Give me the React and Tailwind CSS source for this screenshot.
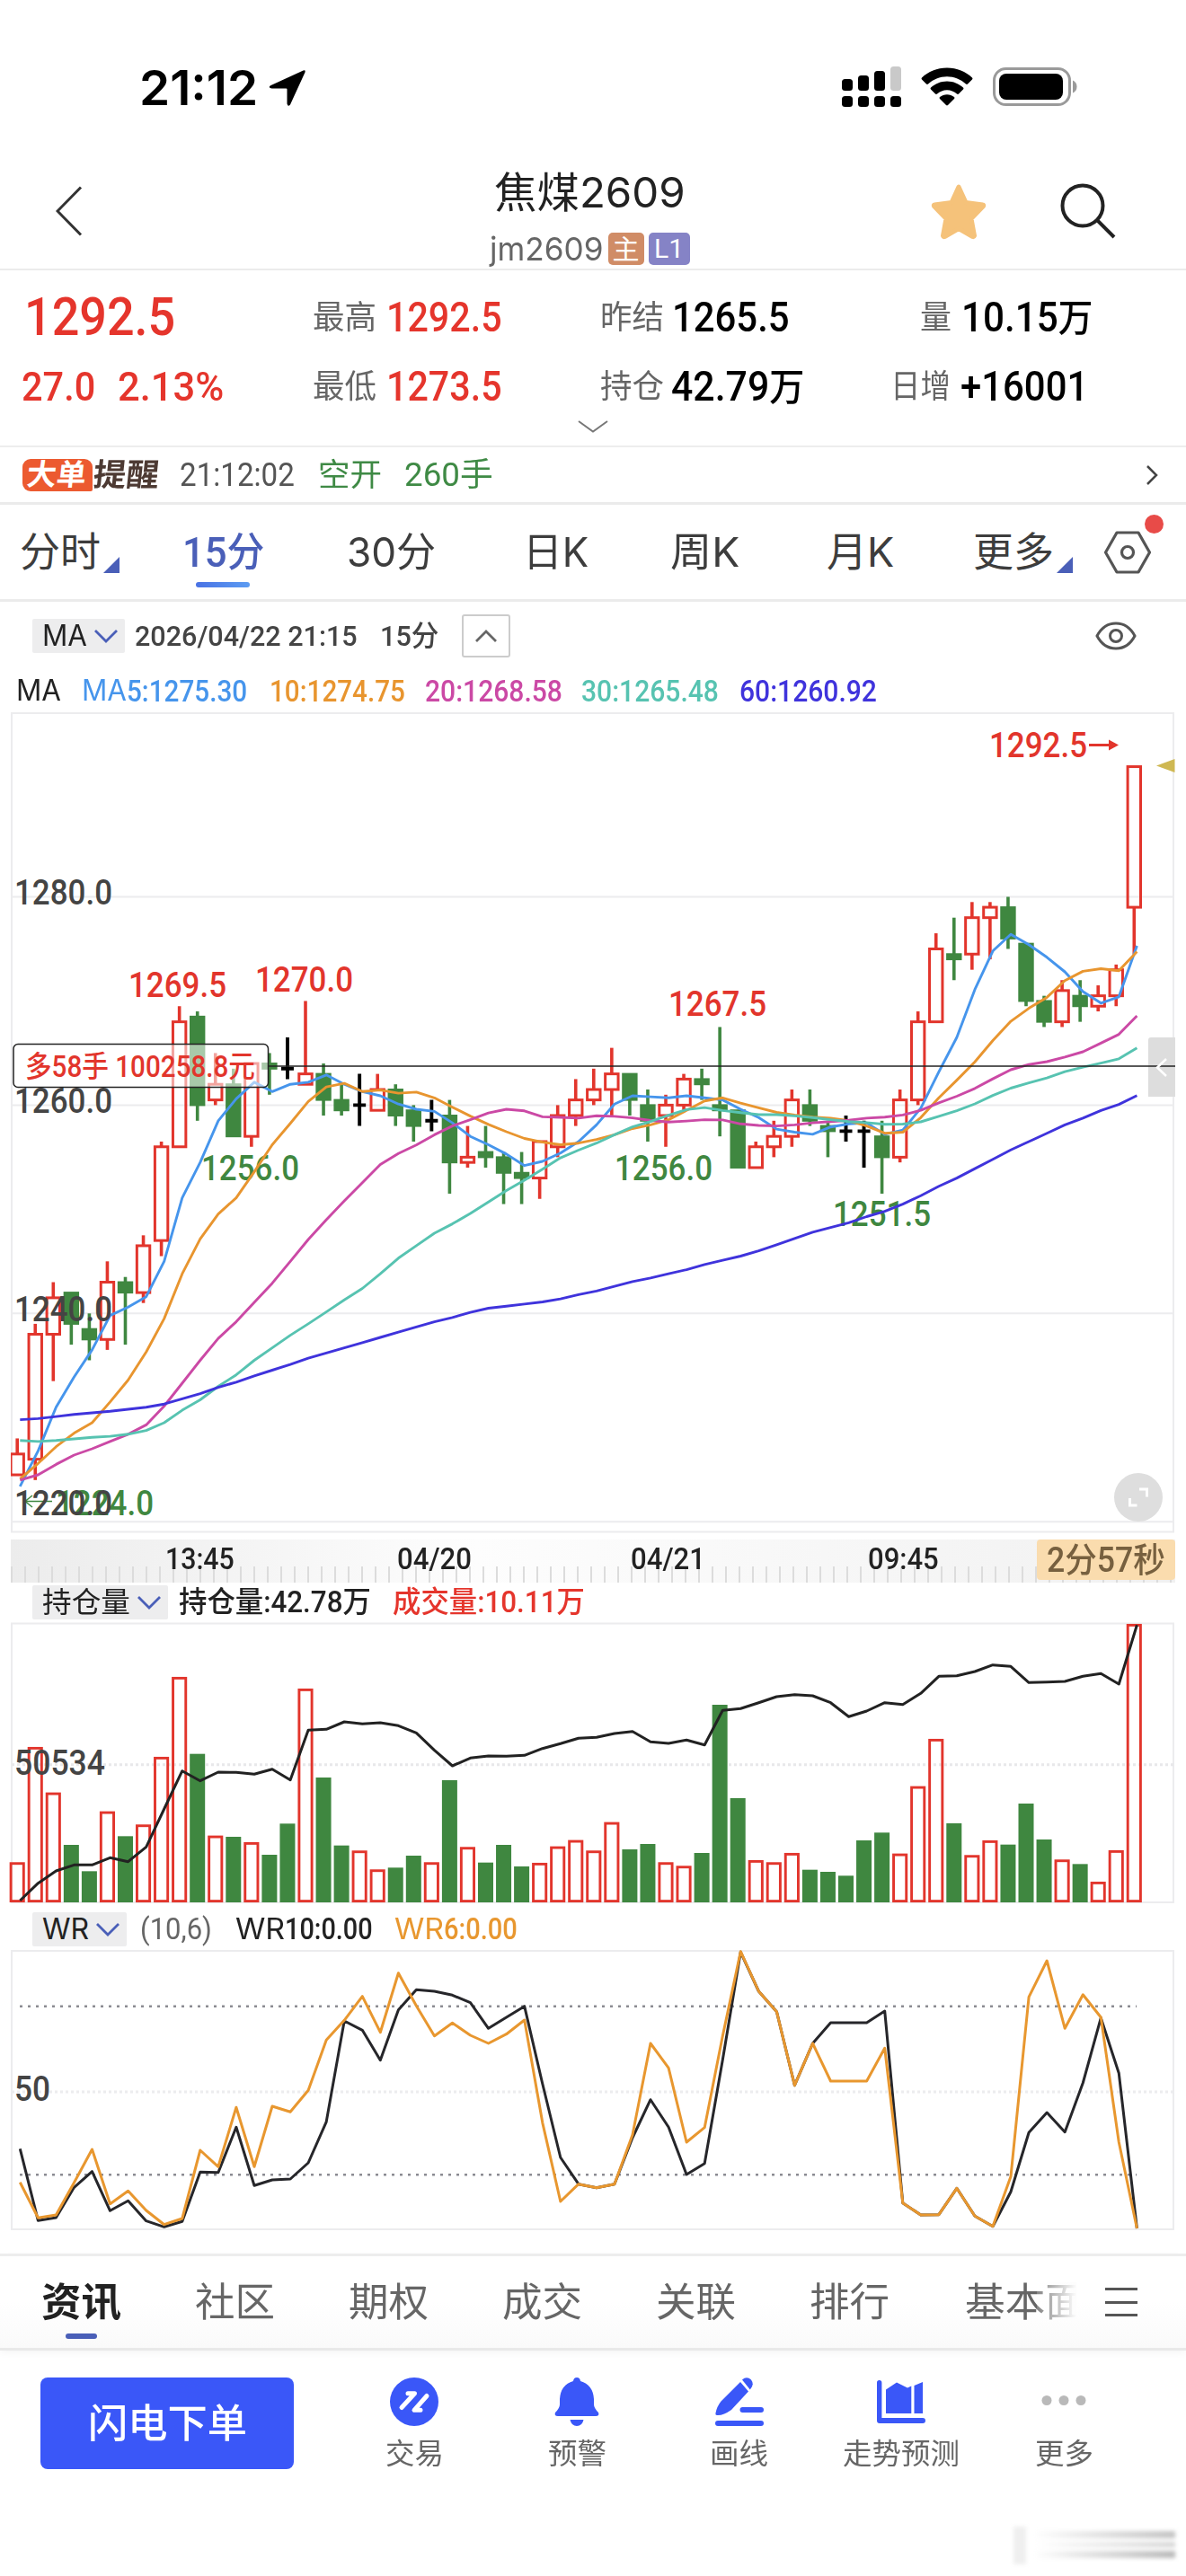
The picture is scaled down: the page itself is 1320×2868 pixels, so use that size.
import { useLayoutEffect, useRef, useState } from "react";

const NUM = "font-['Roboto','Noto_Sans_CJK_SC',sans-serif]";
const UI = "font-['Inter','Noto_Sans_CJK_SC',sans-serif]";

// One line of text whose glyphs are condensed or widened to fill `w` pixels.
function Fit({ w, className = "", children }) {
  const ref = useRef(null);
  const [k, setK] = useState(1);
  useLayoutEffect(() => {
    setK(w / ref.current.offsetWidth);
  }, [w]);
  return (
    <span className={"inline-block shrink-0 whitespace-nowrap leading-none " + className} style={{ width: w }}>
      <span ref={ref} className="inline-block origin-left" style={{ transform: `scaleX(${k})` }}>
        {children}
      </span>
    </span>
  );
}

const RED = "#e2352c";
const GREEN = "#3f8740";

/* ---------- data ---------- */
// [body top, body bottom, high, low, kind]  kind: r = up, g = down, d = doji
const CANDLES = [
  [1226.5, 1224.5, 1228, 1224.5, "r"], [1238, 1226, 1239, 1224, "r"], [1241.5, 1238, 1243, 1233.5, "r"],
  [1242, 1239, 1242, 1237, "g"], [1238.5, 1237.5, 1240, 1235.5, "g"], [1243, 1237.5, 1245, 1236.5, "r"],
  [1243, 1242, 1243.5, 1237, "g"], [1246.5, 1242, 1247.5, 1241, "r"], [1256, 1247, 1256.5, 1245.5, "r"],
  [1268, 1256, 1269.5, 1256, "r"], [1268.5, 1260, 1269, 1258.5, "g"], [1262, 1260.5, 1265, 1260, "r"],
  [1262, 1257, 1263.5, 1257, "g"], [1264, 1257, 1264, 1256, "r"], [1264, 1263.5, 1265, 1261, "g"],
  [1263.5, 1263.5, 1266.5, 1262.5, "d"], [1263, 1262, 1270, 1262, "r"], [1263, 1260.5, 1264, 1259, "g"],
  [1260.5, 1259.5, 1262, 1259, "g"], [1260, 1260, 1263, 1258, "d"], [1261.5, 1259.5, 1263, 1259.5, "r"],
  [1261.5, 1259, 1262, 1258, "g"], [1259.5, 1258, 1260, 1256.5, "g"], [1258.5, 1258.5, 1260.5, 1257.5, "d"],
  [1259, 1254.5, 1260.5, 1251.5, "g"], [1255, 1254.5, 1258, 1254, "r"], [1255.5, 1255, 1258, 1254, "g"],
  [1255, 1253.5, 1255.5, 1250.5, "g"], [1253.5, 1253, 1255.5, 1250.5, "g"], [1256.5, 1253, 1256.5, 1251, "r"],
  [1259, 1256, 1260, 1255, "r"], [1260.5, 1259, 1262.5, 1258, "r"], [1261.5, 1260.5, 1263.5, 1260, "r"],
  [1263, 1261.5, 1265.5, 1259, "r"], [1263, 1260.5, 1263, 1259, "g"], [1260, 1258.5, 1261.5, 1256.5, "g"],
  [1260, 1259, 1261, 1256, "r"], [1262.5, 1260, 1263, 1259.5, "r"], [1262.5, 1262, 1263.5, 1260.5, "g"],
  [1260, 1259.5, 1267.5, 1257, "g"], [1259.5, 1254, 1259.5, 1254, "g"], [1256, 1254, 1256.5, 1254, "r"],
  [1257, 1256, 1258.5, 1255, "r"], [1260.5, 1257, 1261.5, 1256, "r"], [1260, 1258.5, 1261.5, 1258, "g"],
  [1258, 1257.5, 1258.5, 1255, "g"], [1257.5, 1257.5, 1259, 1256.5, "d"], [1257.5, 1257.5, 1258.5, 1254, "d"],
  [1257, 1255, 1258.5, 1251.5, "g"], [1260.5, 1255, 1261.5, 1254.5, "r"], [1268, 1260.5, 1269, 1260, "r"],
  [1275, 1268, 1276.5, 1268, "r"], [1274.5, 1274, 1278, 1272, "g"], [1278, 1274.5, 1279.5, 1273, "r"],
  [1279, 1278, 1279.5, 1274, "r"], [1279, 1276, 1280, 1275, "g"], [1275.5, 1270, 1275.5, 1269.5, "g"],
  [1270, 1268, 1270.5, 1267.5, "g"], [1271, 1268, 1272, 1267.5, "r"], [1270.5, 1269.5, 1272, 1268, "g"],
  [1270.5, 1269.5, 1271.5, 1269, "r"], [1273, 1270.5, 1273.5, 1269.5, "r"], [1292.5, 1279, 1292.5, 1274.5, "r"],
];
const CLOSES = CANDLES.map(([t, b, , , k]) => (k === "r" ? t : b));

// Moving average; `head` holds the values that depend on bars before the window.
const ma = (n, head) =>
  CLOSES.map((_, i) =>
    i < n - 1 ? head[i] : CLOSES.slice(i - n + 1, i + 1).reduce((a, b) => a + b, 0) / n
  );

const MAS = [
  ["#4695ec", ma(5, [1223.4, 1226.8, 1231, 1233.9])],
  ["#e8952f", ma(10, [1224.1, 1225.6, 1227.2, 1228.5, 1229.5, 1231.5, 1233.6, 1236.3, 1239.5])],
  ["#cb49a5", ma(20, [1224, 1224.5, 1225.5, 1226.4, 1227, 1227.7, 1228.4, 1229.3, 1231.1, 1233.3, 1235.5, 1237.6, 1239.2, 1241.05, 1242.9, 1245, 1247.1, 1249, 1250.8])],
  ["#57c3b1", ma(30, [1227.8, 1227.7, 1227.8, 1227.95, 1228.1, 1228.2, 1228.4, 1228.75, 1229.5, 1230.7, 1231.7, 1233, 1234.1, 1235.5, 1236.7, 1237.9, 1239, 1240.15, 1241.3, 1242.4, 1243.8, 1245.3, 1246.5, 1247.7, 1248.6, 1249.6, 1250.7, 1251.8, 1252.8])],
  ["#3f33dc", ma(60, [1229.8, 1229.9, 1230.1, 1230.3, 1230.45, 1230.6, 1230.8, 1231, 1231.3, 1231.8, 1232.3, 1232.9, 1233.4, 1234, 1234.55, 1235.1, 1235.7, 1236.2, 1236.7, 1237.2, 1237.7, 1238.2, 1238.7, 1239.2, 1239.6, 1240.1, 1240.5, 1240.7, 1240.9, 1241.1, 1241.4, 1241.8, 1242.15, 1242.6, 1243.05, 1243.4, 1243.8, 1244.2, 1244.7, 1245.1, 1245.5, 1246, 1246.6, 1247.2, 1247.8, 1248.25, 1248.7, 1249.3, 1249.8, 1250.5, 1251.3, 1252.2, 1253, 1253.9, 1254.8, 1255.7, 1256.5, 1257.3, 1258.1])],
];

// Tops of the volume bars and line points, in thirds of a pixel below the panel origin.
const VOL = [850, 465, 617, 792, 880, 680, 763, 724, 498, 231, 488, 761, 765, 783, 825, 721, 270, 567, 794, 811, 874, 868, 828, 850, 576, 799, 851, 792, 864, 852, 797, 776, 811, 716, 807, 789, 850, 862, 819, 324, 636, 843, 850, 819, 875, 882, 895, 777, 751, 821, 596, 438, 720, 826, 777, 791, 654, 774, 841, 856, 915, 810, 54];
const OI = [978, 920, 879, 859, 859, 835, 848, 799, 672, 545, 578, 549, 550, 556, 539, 575, 409, 406, 381, 388, 384, 394, 418, 476, 528, 502, 495, 496, 493, 470, 454, 436, 433, 420, 413, 448, 453, 442, 458, 343, 337, 317, 297, 290, 294, 317, 364, 345, 317, 323, 286, 229, 227, 213, 191, 196, 250, 248, 246, 229, 220, 255, 58];
const WR10 = [817, 1057, 1047, 946, 893, 1024, 991, 1058, 1078, 1060, 895, 896, 745, 940, 921, 918, 864, 727, 390, 421, 521, 353, 286, 291, 304, 329, 415, 378, 341, 600, 846, 935, 947, 935, 780, 653, 745, 903, 866, 520, 160, 291, 359, 605, 465, 396, 396, 396, 357, 998, 1038, 1037, 949, 1042, 1076, 961, 763, 696, 761, 597, 380, 565, 1083];
const WR6 = [929, 1048, 1038, 930, 819, 1001, 958, 1023, 1070, 1050, 822, 877, 679, 877, 675, 694, 622, 454, 388, 308, 428, 230, 340, 440, 397, 438, 465, 434, 387, 730, 993, 935, 947, 935, 770, 465, 547, 795, 746, 440, 158, 291, 359, 605, 465, 591, 591, 591, 481, 998, 1038, 1037, 949, 1042, 1076, 910, 310, 189, 415, 302, 378, 795, 1083];

const bx = (i) => 19.2 + 20.05 * i;
const lx = (i) => 22.3 + 20.05 * i;
const py = (p) => 1230.4 - (p - 1260) * 11.595;
const line = (vals, f) => vals.map((v, i) => `${lx(i).toFixed(1)},${f(v).toFixed(1)}`).join(" ");

function Label({ x, y, w, c, size = 39, children }) {
  return (
    <text x={x} y={y} textLength={w} lengthAdjust="spacingAndGlyphs" fill={c} fontSize={size} className={NUM + " font-medium"}>
      {children}
    </text>
  );
}

function PriceChart() {
  return (
    <svg className="block shrink-0" width="1320" height="914" viewBox="0 793 1320 914">
      <g stroke="#ececee" strokeWidth="2" fill="none">
        <path d="M13 1705.500V794H1306V1705.500Z" />
        <path d="M13 998.500H1307M13 1230.400H1307M13 1462.300H1307M13 1694.300H1307" />
      </g>
      <clipPath id="plot"><rect x="12" y="793" width="1296" height="914" /></clipPath>
      <g clipPath="url(#plot)">
        {CANDLES.map(([t, b, h, l, k], i) => {
          const x = bx(i);
          if (k === "d")
            return (
              <path key={i} d={`M${x} ${py(h)}V${py(l)}M${x - 7} ${py(t)}H${x + 7}`} stroke="#000" strokeWidth="3.9" />
            );
          const c = k === "r" ? RED : GREEN;
          return (
            <g key={i} stroke={c} fill="none">
              {h > t && <path d={`M${x} ${py(h)}V${py(t)}`} strokeWidth="3.6" />}
              {l < b && <path d={`M${x} ${py(b)}V${py(l)}`} strokeWidth="3.6" />}
              {k === "r" ? (
                <rect x={x - 7.2} y={py(t)} width="14.4" height={py(b) - py(t)} strokeWidth="3" />
              ) : (
                <rect x={x - 8.7} y={py(t) - 1} width="17.4" height={py(b) - py(t) + 2} fill={c} stroke="none" />
              )}
            </g>
          );
        })}
      </g>
      <Label x={224} y={1314} w={109} c={GREEN}>1256.0</Label>
      <Label x={684} y={1314} w={109} c={GREEN}>1256.0</Label>
      <Label x={927} y={1365} w={109} c={GREEN}>1251.5</Label>
      <Label x={62} y={1687} w={109} c={GREEN}>1224.0</Label>
      <path d="M58 1671.500H28M36 1665L28 1671.500L36 1678" stroke={GREEN} strokeWidth="1.500" fill="none" />
      {MAS.map(([c, v]) => (
        <polyline key={c} points={line(v, py)} fill="none" stroke={c} strokeWidth="2.900" strokeLinejoin="round" />
      ))}
      <Label x={143} y={1110} w={109} c={RED}>1269.5</Label>
      <Label x={284} y={1104} w={109} c={RED}>1270.0</Label>
      <Label x={744} y={1131} w={109} c={RED}>1267.5</Label>
      <Label x={1101} y={843} w={109} c={RED}>1292.5</Label>
      <path d="M1212 829.500H1238" stroke={RED} strokeWidth="3" />
      <path d="M1234 823.500L1245 829.500L1234 835.500Z" fill={RED} />
      {[[1280, 1007], [1260, 1239], [1240, 1471], [1220, 1687]].map(([p, y]) => (
        <Label key={p} x={16} y={y} w={109} c="#444">{p.toFixed(1)}</Label>
      ))}
      <path d="M1287 852.500L1307.500 845V860Z" fill="#cfb852" />
      <path d="M1278 1221V1158Q1278 1155 1281 1155H1308V1221Z" fill="#dddddd" />
      <path d="M298 1187H1308" stroke="#222" strokeWidth="1.500" />
      <path d="M1298 1179L1288 1188.500L1298 1198" stroke="#fff" strokeWidth="2.500" fill="none" />
      <rect x="15" y="1162.500" width="283.500" height="48" rx="5" fill="#fff" fillOpacity=".55" stroke="#222" strokeWidth="1.500" />
      <Label x={28} y={1199} w={256} c={RED} size={33}>多58手 100258.8元</Label>
      <circle cx="1267" cy="1667" r="27" fill="#dedede" />
      <path d="M1268 1658H1276.500V1666.500M1265.500 1676H1257.500V1668" stroke="#fff" strokeWidth="3" fill="none" />
    </svg>
  );
}

const VOL_UP = { 19: 1, 23: 1 };
function VolumeChart() {
  const y = (v) => 1790 + v / 3;
  return (
    <svg className="block shrink-0" width="1320" height="314" viewBox="0 1806 1320 314">
      <path d="M13 1807.500H1306V2118H13Z" stroke="#ececee" strokeWidth="2" fill="none" />
      <path d="M13 1964.700H1306" stroke="#e8e8ea" strokeWidth="3" strokeDasharray="3 3" />
      {VOL.map((v, i) => {
        const up = CANDLES[i][4] === "r" || VOL_UP[i];
        const t = y(v);
        return up ? (
          <rect key={i} x={bx(i) - 7.1} y={t + 1.400} width="14.200" height={2116.600 - t - 1.400} fill="none" stroke={RED} strokeWidth="2.900" />
        ) : (
          <rect key={i} x={bx(i) - 8.500} y={t} width="17" height={2118 - t} fill={GREEN} />
        );
      })}
      <polyline points={line(OI, y)} fill="none" stroke="#222" strokeWidth="3" strokeLinejoin="round" />
      <Label x={16} y={1975.5} w={101} c="#444" size={38}>50534</Label>
    </svg>
  );
}

function WrChart() {
  const y = (v) => 2120 + v / 3;
  return (
    <svg className="block shrink-0" width="1320" height="314" viewBox="0 2170 1320 314">
      <path d="M13 2172H1306V2482H13Z" stroke="#ececee" strokeWidth="2" fill="none" />
      <path d="M13 2329H1306" stroke="#ececee" strokeWidth="3" strokeDasharray="3 3" />
      <path d="M22 2233.700H1265M22 2421.300H1265" stroke="#8b8b92" strokeWidth="2.600" strokeDasharray="3 6" />
      <polyline points={line(WR10, y)} fill="none" stroke="#26262a" strokeWidth="3" strokeLinejoin="round" />
      <polyline points={line(WR6, y)} fill="none" stroke="#e8972f" strokeWidth="3" strokeLinejoin="round" />
      <Label x={16} y={2339} w={40} c="#444" size={38}>50</Label>
    </svg>
  );
}

/* ---------- top ---------- */
function StatusBar() {
  return (
    <div className="flex h-[160px] shrink-0 items-start pt-[70px]">
      <div className="ml-[155px] flex h-[56px] items-center">
        <Fit w={132} className={UI + " text-[54px] font-semibold text-black"}>21:12</Fit>
      </div>
      <svg className="mt-[6px] ml-[11px]" width="43" height="44" viewBox="0 0 43 44">
        <path d="M39.500 2.500Q42.500 1.200 41.500 4.500L25 40.500Q22.500 43.500 21.500 39.500V23.500Q21.500 22.500 20.500 22.500H4.500Q0 21.500 3 19.200Z" fill="#000" />
      </svg>
      <svg className="mt-[2px] ml-[596px]" width="66" height="49" viewBox="0 0 66 49">
        <rect x="0" y="16" width="12" height="13" rx="3.500" />
        <rect x="18" y="12" width="12" height="17" rx="3.500" />
        <rect x="36" y="7" width="12" height="22" rx="3.500" />
        <rect x="54" y="2" width="12" height="27" rx="3.500" fill="#c9c9c9" />
        {[0, 18, 36, 54].map((x) => <rect key={x} x={x} y="35" width="12" height="12" rx="3.500" />)}
      </svg>
      <svg className="mt-[5px] ml-[22px]" width="58" height="43" viewBox="0 0 58 43">
        <path d="M29 .5C40 .5 50 4.800 57 11.500Q58 12.500 57 13.500L52 18.500Q51 19.300 50 18.500C44.500 13.300 37 10.200 29 10.200S13.500 13.300 8 18.500Q7 19.300 6 18.500L1 13.500Q0 12.500 1 11.500C8 4.800 18 .5 29 .5Z" />
        <path d="M29 15.500C36 15.500 42.300 18.300 47 22.500Q48 23.500 47 24.500L42 29.500Q41 30.300 40 29.500C37 26.800 33.200 25.200 29 25.200S21 26.800 18 29.500Q17 30.300 16 29.500L11 24.500Q10 23.500 11 22.500C15.700 18.300 22 15.500 29 15.500Z" />
        <path d="M29 30.200C32 30.200 34.800 31.300 37 33Q38 34 37 35L30 42Q29 42.800 28 42L21 35Q20 34 21 33C23.200 31.300 26 30.200 29 30.200Z" />
      </svg>
      <svg className="mt-[5px] ml-[22px]" width="94" height="43" viewBox="0 0 94 43">
        <rect x="1.500" y="1.500" width="84" height="40" rx="13" fill="none" stroke="#9a9a9a" strokeWidth="3" />
        <rect x="7" y="7" width="71" height="29" rx="8" />
        <path d="M89 14.500Q93.500 16.500 93.500 21.500T89 28.500Z" fill="#9a9a9a" />
      </svg>
    </div>
  );
}

function Header() {
  return (
    <div className="flex h-[141px] shrink-0 items-start border-b-2 border-[#ebebeb]">
      <svg className="mt-[47px] ml-[62px]" width="30" height="56" viewBox="0 0 30 56">
        <path d="M28 1.500L2 28L28 54.500" stroke="#333" strokeWidth="3" fill="none" />
      </svg>
      <div className="mt-[30px] ml-[449px] flex w-[230px] flex-col items-center">
        <Fit w={213} className={UI + " text-[47px] text-[#222]"}>焦煤2609</Fit>
        <div className="mt-[22px] flex h-[36px] items-center">
          <Fit w={127} className={UI + " text-[36px] text-[#666]"}>jm2609</Fit>
          <span className={UI + " ml-[5px] flex h-[36px] w-[40px] items-center justify-center rounded-[5px] bg-[#d08c66] text-[30px] leading-none text-white"}>主</span>
          <span className={NUM + " ml-[5px] flex h-[36px] w-[46px] items-center justify-center rounded-[5px] bg-[#8583c6] text-[30px] leading-none text-white"}>L1</span>
        </div>
      </div>
      <svg className="mt-[43px] ml-[264px]" width="64" height="66" viewBox="0 0 64 66">
        <path d="M32 5L40 22.500L59 25Q60 25 59.500 26.500L46 40.500L49.500 59.500Q49 61 47.500 60.500L32 51.500L16.500 60.500Q15 61 14.500 59.500L18 40.500L4.500 26.500Q4 25 5 25L24 22.500Z" fill="#f5c27a" stroke="#f5c27a" strokeWidth="5" strokeLinejoin="round" />
      </svg>
      <svg className="mt-[44px] ml-[80px]" width="64" height="64" viewBox="0 0 64 64">
        <circle cx="26" cy="25" r="22.500" fill="none" stroke="#222" strokeWidth="4" />
        <path d="M42 41L61 60" stroke="#222" strokeWidth="4" />
      </svg>
    </div>
  );
}

function Pair({ ml, label, lw, gap, value, vw, c = "text-black" }) {
  return (
    <div className={"flex items-center " + ml}>
      <Fit w={lw} className={UI + " text-[36px] text-[#666]"}>{label}</Fit>
      <Fit w={vw} className={NUM + " font-medium text-[46px] " + gap + " " + c}>{value}</Fit>
    </div>
  );
}

function Quote() {
  return (
    <div className="relative h-[197px] shrink-0 border-b-2 border-[#ededed]">
      <div className="flex h-[103px] items-center">
        <Fit w={168} className={NUM + " ml-[27px] text-[60px] font-medium text-[#e5352c]"}>1292.5</Fit>
        <Pair ml="ml-[153px]" label="最高" lw={71} gap="ml-[11px]" value="1292.5" vw={129} c="text-[#e5352c]" />
        <Pair ml="ml-[109px]" label="昨结" lw={71} gap="ml-[9px]" value="1265.5" vw={131} />
        <Pair ml="ml-[145px]" label="量" lw={35} gap="ml-[11px]" value={<>10.15<span className="text-[42px]">万</span></>} vw={146} />
      </div>
      <div className="flex h-[52px] items-center">
        <Fit w={82} className={NUM + " ml-[24px] text-[45px] font-medium text-[#e5352c]"}>27.0</Fit>
        <Fit w={118} className={NUM + " ml-[25px] text-[45px] font-medium text-[#e5352c]"}>2.13%</Fit>
        <Pair ml="ml-[99px]" label="最低" lw={71} gap="ml-[11px]" value="1273.5" vw={129} c="text-[#e5352c]" />
        <Pair ml="ml-[109px]" label="持仓" lw={71} gap="ml-[8px]" value={<>42.79<span className="text-[42px]">万</span></>} vw={148} />
        <Pair ml="ml-[96px]" label="日增" lw={67} gap="ml-[11px]" value="+16001" vw={142} />
      </div>
      <svg className="mx-auto mt-[12px] block" width="34" height="14" viewBox="0 0 34 14">
        <path d="M1 1L17 12.500L33 1" stroke="#777" strokeWidth="2" fill="none" />
      </svg>
    </div>
  );
}

function Alert() {
  return (
    <div className="flex h-[64px] shrink-0 items-center border-b-3 border-[#ebebeb]">
      <div className="ml-[25px] flex h-[36px] w-[78px] items-center rounded-t-[9px] rounded-bl-[9px] rounded-br-[2px] bg-[#ec5a30] pl-[5px]">
        <Fit w={66} className={UI + " -skew-x-6 text-[33px] font-bold text-white"}>大单</Fit>
      </div>
      <Fit w={73} className={UI + " ml-[1px] -skew-x-6 text-[35px] font-bold text-[#4d3a33]"}>提醒</Fit>
      <Fit w={128} className={NUM + " ml-[23px] text-[36px] text-[#555]"}>21:12:02</Fit>
      <Fit w={71} className={UI + " ml-[26px] text-[35px] text-[#3f8a45]"}>空开</Fit>
      <Fit w={99} className={NUM + " ml-[25px] text-[36px] text-[#3f8a45]"}>260手</Fit>
      <svg className="ml-[726px]" width="14" height="22" viewBox="0 0 14 22">
        <path d="M2 1L12 11L2 21" stroke="#444" strokeWidth="2.500" fill="none" />
      </svg>
    </div>
  );
}

const Corner = () => (
  <svg className="mt-[28px] ml-[3px] shrink-0" width="18" height="18" viewBox="0 0 18 18">
    <path d="M18 0V18H0Z" fill="#4a5fb8" />
  </svg>
);

function Periods() {
  const t = UI + " text-[45px] text-[#3d3d3d] ";
  return (
    <div className="relative flex h-[108px] shrink-0 items-center border-b-3 border-[#ebebeb]">
      <Fit w={90} className={t + "ml-[22px]"}>分时</Fit>
      <Corner />
      <div className="relative ml-[70px] flex">
        <Fit w={91} className={NUM + " text-[47px] font-medium text-[#4a5fb8]"}>15<span className="text-[45px]">分</span></Fit>
        <span className="absolute top-[57px] left-[15px] h-[6px] w-[60px] rounded-[3px] bg-linear-to-r from-[#4a72e4] to-[#5c9cf2]" />
      </div>
      <Fit w={99} className={t + "ml-[92px]"}>30分</Fit>
      <Fit w={73} className={t + "ml-[97px]"}>日K</Fit>
      <Fit w={77} className={t + "ml-[91px]"}>周K</Fit>
      <Fit w={75} className={t + "ml-[97px]"}>月K</Fit>
      <Fit w={90} className={t + "ml-[88px]"}>更多</Fit>
      <Corner />
      <svg className="ml-[34px] shrink-0" width="54" height="50" viewBox="0 0 54 50">
        <path d="M15 3H39L51.500 25L39 47H15L2.500 25Z" fill="none" stroke="#555" strokeWidth="3.200" strokeLinejoin="round" />
        <circle cx="27" cy="25" r="6.500" fill="none" stroke="#555" strokeWidth="3.200" />
      </svg>
      <span className="absolute top-[11px] right-[25px] size-[21px] rounded-full bg-[#e84b48]" />
    </div>
  );
}

function Chip({ children, w, tw }) {
  return (
    <div className="flex h-[38px] items-center rounded-[2px] bg-[#ededee]" style={{ width: w }}>
      <Fit w={tw} className={UI + " ml-[11px] text-[32px] text-[#222]"}>{children}</Fit>
      <svg className="ml-auto mr-[7px]" width="28" height="16" viewBox="0 0 28 16">
        <path d="M2 2L14 14L26 2" stroke="#4a5fb8" strokeWidth="2.800" fill="none" />
      </svg>
    </div>
  );
}

function ChartToolbar() {
  return (
    <div className="flex h-[76px] shrink-0 items-center">
      <div className="ml-[36px]"><Chip w={103} tw={50}>MA</Chip></div>
      <Fit w={248} className={NUM + " ml-[11px] text-[32px] font-medium text-[#444]"}>2026/04/22 21:15</Fit>
      <Fit w={65} className={NUM + " ml-[25px] text-[32px] font-medium text-[#444]"}>15分</Fit>
      <div className="ml-[26px] flex h-[48px] w-[54px] items-center justify-center rounded-[3px] border-2 border-[#ccc]">
        <svg width="26" height="15" viewBox="0 0 26 15"><path d="M2 13L13 2L24 13" stroke="#666" strokeWidth="2.800" fill="none" /></svg>
      </div>
      <svg className="ml-[651px]" width="46" height="34" viewBox="0 0 46 34">
        <path d="M2 17C7 7.500 14 3 23 3S39 7.500 44 17C39 26.500 32 31 23 31S7 26.500 2 17Z" fill="none" stroke="#555" strokeWidth="3" />
        <circle cx="23" cy="17" r="6.500" fill="none" stroke="#555" strokeWidth="3" />
      </svg>
    </div>
  );
}

function MaLegend() {
  const n = NUM + " text-[33px] font-medium ";
  return (
    <div className="flex h-[47px] shrink-0 items-center pb-[1px]">
      <Fit w={50} className={UI + " ml-[18px] text-[32px] text-[#222]"}>MA</Fit>
      <Fit w={50} className={UI + " ml-[23px] text-[32px] text-[#4695ec]"}>MA</Fit>
      <Fit w={134} className={n + "text-[#4695ec]"}>5:1275.30</Fit>
      <Fit w={151} className={n + "ml-[25px] text-[#e8952f]"}>10:1274.75</Fit>
      <Fit w={153} className={n + "ml-[22px] text-[#cb49a5]"}>20:1268.58</Fit>
      <Fit w={153} className={n + "ml-[21px] text-[#57c3b1]"}>30:1265.48</Fit>
      <Fit w={153} className={n + "ml-[23px] text-[#3f33dc]"}>60:1260.92</Fit>
    </div>
  );
}

function TimeAxis() {
  const n = NUM + " text-[33px] font-medium text-[#222] mb-[5px] ";
  return (
    <div className="relative mt-[7px] ml-[12px] flex h-[48px] w-[1296px] shrink-0 items-center bg-linear-to-r from-[#ececec] via-[#fdfdfd] via-40% to-[#f1f1f1]">
      <div className="absolute inset-x-0 bottom-0 h-[18px] bg-[repeating-linear-gradient(90deg,#dcdcdc_0_2px,transparent_2px_15px)]" />
      <Fit w={77} className={n + "relative ml-[172px]"}>13:45</Fit>
      <Fit w={83} className={n + "relative ml-[181px]"}>04/20</Fit>
      <Fit w={83} className={n + "relative ml-[177px]"}>04/21</Fit>
      <Fit w={79} className={n + "relative ml-[181px]"}>09:45</Fit>
      <div className="relative ml-auto flex h-full w-[154px] items-start">
        <div className="flex h-[45px] w-full items-center justify-center rounded-[4px] bg-[#fadcae]">
          <Fit w={132} className={NUM + " text-[38px] font-medium text-[#77603f]"}>2分57秒</Fit>
        </div>
      </div>
    </div>
  );
}

function VolumeLegend() {
  const n = NUM + " text-[33px] font-medium ";
  return (
    <div className="flex h-[43px] shrink-0 items-center">
      <div className="ml-[36px]"><Chip w={151} tw={98}>持仓量</Chip></div>
      <Fit w={214} className={n + "ml-[12px] text-[#222]"}>持仓量:42.78万</Fit>
      <Fit w={214} className={n + "ml-[24px] text-[#e5352c]"}>成交量:10.11万</Fit>
    </div>
  );
}

function WrLegend() {
  const n = NUM + " text-[33px] font-medium ";
  return (
    <div className="flex h-[50px] shrink-0 items-center pt-[5px]">
      <div className="ml-[36px]"><Chip w={105} tw={52}>WR</Chip></div>
      <Fit w={80} className={NUM + " ml-[15px] text-[33px] text-[#666]"}>(10,6)</Fit>
      <Fit w={55} className={UI + " ml-[26px] text-[32px] text-[#222]"}>WR</Fit>
      <Fit w={98} className={n + "text-[#222]"}>10:0.00</Fit>
      <Fit w={55} className={UI + " ml-[24px] text-[32px] text-[#e8972f]"}>WR</Fit>
      <Fit w={82} className={n + "text-[#e8972f]"}>6:0.00</Fit>
    </div>
  );
}

/* ---------- bottom ---------- */
function InfoTabs() {
  return (
    <div className="mt-[25px] flex h-[108px] shrink-0 items-center border-t-3 border-b-3 border-t-[#ededed] border-b-[#e9e9e9] bg-linear-to-b from-white from-50% to-[#fafafa] shadow-[0_3px_8px_rgba(0,0,0,0.04)]">
      <div className="relative ml-[46px] flex">
        <Fit w={89} className={UI + " text-[44px] font-bold text-[#222]"}>资讯</Fit>
        <span className="absolute top-[57px] left-[27px] h-[6px] w-[35px] rounded-[3px] bg-[#4a5fb8]" />
      </div>
      {["社区", "期权", "成交", "关联", "排行"].map((t) => (
        <Fit key={t} w={89} className={UI + " ml-[82px] text-[44px] text-[#666]"}>{t}</Fit>
      ))}
      <div className="relative ml-[84px] flex w-[124px] overflow-hidden">
        <Fit w={134} className={UI + " text-[44px] text-[#666]"}>基本面</Fit>
        <span className="absolute inset-y-0 right-0 w-[44px] bg-linear-to-r from-white/20 to-[#fdfdfd]" />
      </div>
      <div className="ml-[32px] flex w-[36px] flex-col gap-[11.500px]">
        <span className="h-[3px] bg-[#555]" />
        <span className="h-[3px] bg-[#555]" />
        <span className="h-[3px] bg-[#555]" />
      </div>
    </div>
  );
}

const ICONS = {
  交易: (
    <>
      <circle cx="27" cy="27" r="27" fill="#3a57f8" />
      <path d="M20 17.700H27.500L13 33.500M41 20.500L27 36.300H34" fill="none" stroke="#fff" strokeWidth="5" strokeLinecap="round" strokeLinejoin="round" />
    </>
  ),
  预警: (
    <path d="M27 0Q30.500 0 31 4Q45 8 46 24V30Q46 34 51 39Q52.500 43 48 43H6Q1.500 43 3 39Q8 34 8 30V24Q9 8 23 4Q23.500 0 27 0ZM19.500 47H34.500Q33 54 27 54T19.500 47Z" fill="#3a57f8" />
  ),
  画线: (
    <>
      <path d="M28 5L37 15.500L18 36Q9 42.500 2 42Q0 42 .5 39.500Q2 32 6.500 26.500Z" fill="#3a57f8" />
      <path d="M30 2.500Q35 -2 40 2.500Q44 8 38.800 13.500Z" fill="#3a57f8" />
      <path d="M30.500 36H51M3 51H51" stroke="#3a57f8" strokeWidth="6" strokeLinecap="round" />
    </>
  ),
  走势预测: (
    <path d="M0 5.700Q0 3 2.700 3T5.400 5.700V45H51Q54 45 54 48T51 51H3Q0 51 0 48ZM10 13.500L22 5.500L34 11.500L38.300 9.500V40H10ZM41.500 9L51 5V40H41.500Z" fill="#3a57f8" />
  ),
  更多: (
    <g fill="#b9b9b9">
      <circle cx="8" cy="25.500" r="5.500" /><circle cx="27" cy="25.500" r="5.500" /><circle cx="46" cy="25.500" r="5.500" />
    </g>
  ),
};

function ActionBar() {
  return (
    <div className="flex h-[135px] shrink-0 items-start pt-[30px]">
      <div className="ml-[45px] flex h-[102px] w-[282px] items-center justify-center rounded-[8px] bg-[#3a57f8]">
        <Fit w={177} className={UI + " text-[44px] font-medium text-white"}>闪电下单</Fit>
      </div>
      <div className="ml-[44px] flex">
        {Object.entries(ICONS).map(([name, icon]) => (
          <div key={name} className="flex w-[180.700px] flex-col items-center">
            <svg width="54" height="54" viewBox="0 0 54 54">{icon}</svg>
            <Fit w={name.length * 32.5} className={UI + " mt-[15px] text-[32px] text-[#666]"}>{name}</Fit>
          </div>
        ))}
      </div>
    </div>
  );
}

// Faded streaks in the lower right corner.
function Streaks() {
  return (
    <div className="mt-[57px] ml-auto mr-[12px] flex h-[48px] w-[180px] shrink-0 gap-[8px] blur-[2px]">
      <div className="mt-[4px] h-[42px] w-[14px] bg-[#efefef]" />
      <div className="mt-[9px] flex grow flex-col gap-[4px]">
        <div className="h-[8px] bg-linear-to-r from-white to-[#c4c4c4]" />
        <div className="h-[6px] bg-linear-to-r from-white to-[#d6d6d6]" />
        <div className="h-[8px] bg-linear-to-r from-white to-[#bbbbbb]" />
      </div>
    </div>
  );
}

export default function App() {
  return (
    <div className="flex h-[2868px] w-[1320px] flex-col overflow-hidden bg-white">
      <StatusBar />
      <Header />
      <Quote />
      <Alert />
      <Periods />
      <ChartToolbar />
      <MaLegend />
      <PriceChart />
      <TimeAxis />
      <VolumeLegend />
      <div className="mt-[1px]"><VolumeChart /></div>
      <WrLegend />
      <WrChart />
      <InfoTabs />
      <ActionBar />
      <Streaks />
    </div>
  );
}
